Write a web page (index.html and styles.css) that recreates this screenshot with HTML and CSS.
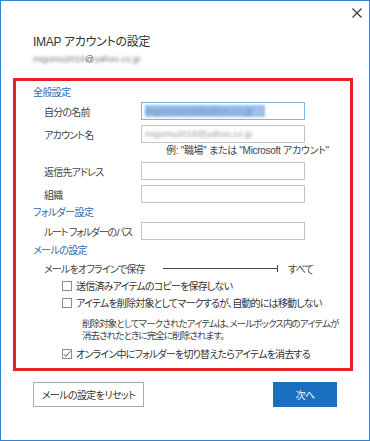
FILE: index.html
```html
<!DOCTYPE html>
<html lang="ja">
<head>
<meta charset="utf-8">
<title>IMAP アカウントの設定</title>
<link rel="stylesheet" href="styles.css">
</head>
<body>
<div class="dialog">
  <div class="topbar">
    <button class="close" aria-label="閉じる">
      <svg width="10" height="10" viewBox="0 0 10 10"><path d="M0.5 0.5 L9.5 9.5 M9.5 0.5 L0.5 9.5" stroke="#333" stroke-width="1.1" fill="none"/></svg>
    </button>
  </div>
  <div class="head">
    <div class="title">IMAP アカウントの設定</div>
    <div class="email"><span class="blur">migomu2019</span>@<span class="blur">yahoo.co.jp</span></div>
  </div>
  <div class="redbox">
    <div class="section">全般設定</div>
    <div class="row">
      <div class="label">自分の名前</div>
      <div class="input focus"><span class="sel"><span class="blur">migomu2019@yahoo.co.jp</span></span></div>
    </div>
    <div class="row">
      <div class="label">アカウント名</div>
      <div class="input"><span class="blur gray">migomu2019@yahoo.co.jp</span></div>
    </div>
    <div class="hint">例: "職場" または "Microsoft アカウント"</div>
    <div class="row">
      <div class="label">返信先アドレス</div>
      <div class="input"></div>
    </div>
    <div class="row">
      <div class="label">組織</div>
      <div class="input"></div>
    </div>
    <div class="section s2">フォルダー設定</div>
    <div class="row">
      <div class="label tight">ルート フォルダーのパス</div>
      <div class="input"></div>
    </div>
    <div class="section s3">メールの設定</div>
    <div class="slider-row">
      <div class="label">メールをオフラインで保存</div>
      <div class="track"><span class="line"></span><span class="tick"></span></div>
      <div class="all">すべて</div>
    </div>
    <div class="check c1"><span class="box"></span>送信済みアイテムのコピーを保存しない</div>
    <div class="check c2"><span class="box"></span>アイテムを削除対象としてマークするが、自動的には移動しない</div>
    <div class="desc">削除対象としてマークされたアイテムは、メールボックス内のアイテムが<br>消去されたときに完全に削除されます。</div>
    <div class="check c3"><span class="box checked"><svg width="8" height="8" viewBox="0 0 8 8"><path d="M0.8 4.2 L3 6.4 L7.3 1.2" stroke="#555" stroke-width="1" fill="none"/></svg></span>オンライン中にフォルダーを切り替えたらアイテムを消去する</div>
  </div>
  <div class="buttons">
    <button class="btn reset">メールの設定をリセット</button>
    <button class="btn next">次へ</button>
  </div>
</div>
</body>
</html>
```
FILE: styles.css
```css
* { box-sizing: border-box; }
html, body { margin: 0; padding: 0; background: #ffffff; }
body {
  font-family: "Liberation Sans", "Noto Sans CJK JP", sans-serif;
  font-feature-settings: "palt";
  color: #333;
  font-size: 10px;
  letter-spacing: -0.8px;
}
.dialog {
  width: 370px;
  height: 441px;
  border: 1px solid #2f84d6;
  background: #fff;
}
.topbar {
  height: 33px;
  display: flex;
  justify-content: flex-end;
  align-items: flex-start;
  padding: 7px 7px 0 0;
}
.close {
  width: 10px; height: 10px; padding: 0; border: 0; background: none;
  display: flex;
}
.head { padding-left: 32px; }
.title {
  font-size: 12px;
  line-height: 16px;
  letter-spacing: -0.3px;
  color: #333;
}
.email {
  margin-top: 3px;
  line-height: 12px;
  font-size: 9px;
  letter-spacing: 0;
  color: #555;
}
.blur { filter: blur(1.4px); color: #777; }
.redbox {
  margin: 13px 0 0 12px;
  width: 340px;
  height: 293px;
  border: 3px solid #e8202a;
  padding: 5px 0 0 17px;
}
.section {
  color: #2e68b0;
  line-height: 14px;
  letter-spacing: -0.6px;
}
.s2 { margin-top: 3px; }
.s3 { margin-top: 4px; }
.row {
  display: flex;
  align-items: center;
  margin-top: 2px;
  height: 18px;
}
.row + .row { margin-top: 5px; }
.label {
  width: 108px;
  padding-left: 11px;
  color: #444;
  white-space: nowrap;
}
.label.tight { letter-spacing: -1.2px; }
.input {
  width: 164px;
  height: 18px;
  border: 1px solid #c4c4c4;
  display: flex;
  align-items: center;
  padding-left: 3px;
  overflow: hidden;
  font-size: 9px;
  letter-spacing: 0;
}
.input.focus { border-color: #82b4e0; }
.sel {
  background: #9cc2ea;
  height: 12px;
  display: flex;
  align-items: center;
  width: 120px;
  filter: blur(1px);
}
.sel .blur { color: #5a7fb0; }
.gray { color: #999; }
.hint {
  line-height: 12px;
  margin: 2px 0 5px 133px;
  color: #444;
  white-space: nowrap;
  letter-spacing: -0.3px;
}
.slider-row {
  display: flex;
  align-items: center;
  height: 14px;
  margin-top: 3px;
}
.slider-row .label { width: 130px; }
.track {
  width: 115px;
  height: 8px;
  display: flex;
  align-items: center;
}
.track .line { flex: 1; height: 1px; background: #444; }
.track .tick { width: 1px; height: 7px; background: #444; }
.all { margin-left: 10px; color: #444; }
.check {
  display: flex;
  align-items: center;
  height: 13px;
  margin-left: 29px;
  color: #333;
  white-space: nowrap;
}
.c1 { margin-top: 4px; }
.c2 { margin-top: 4px; }
.c3 { margin-top: 5px; }
.box {
  width: 10px; height: 10px;
  border: 1px solid #8c8c8c;
  margin-right: 4px;
  display: flex;
  align-items: center;
  justify-content: center;
  flex: none;
}
.desc {
  margin: 9px 0 0 49px;
  line-height: 12px;
  font-size: 9.5px;
  color: #444;
  white-space: nowrap;
  letter-spacing: -0.9px;
}
.buttons {
  display: flex;
  justify-content: space-between;
  padding: 0 32px 0 32px;
  margin-top: 11px;
}
.btn {
  font-family: "Liberation Sans", "Noto Sans CJK JP", sans-serif;
  font-feature-settings: "palt";
  font-size: 10px;
  letter-spacing: -0.6px;
  height: 25px;
  padding: 0;
}
.reset {
  width: 111px;
  border: 1px solid #adadad;
  background: #fff;
  color: #333;
}
.next {
  width: 64px;
  border: 0;
  background: #1b6fc2;
  color: #fff;
}
```
